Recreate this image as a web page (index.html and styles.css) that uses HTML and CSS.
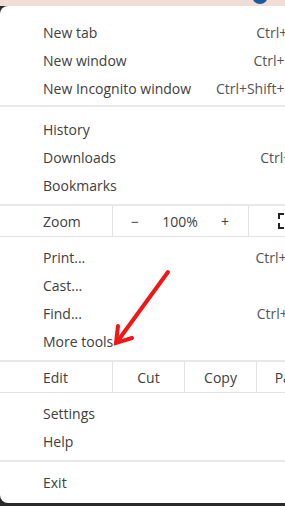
FILE: index.html
```html
<!DOCTYPE html>
<html>
<head>
  <title>Menu</title>
  <link rel="stylesheet" href="styles.css">
</head>
<body>
  <div class="topbar"><span class="avatar"></span></div>
  <div class="menu">
    <div class="group first">
      <div class="item"><span>New tab</span><span class="key">Ctrl+T</span></div>
      <div class="item"><span>New window</span><span class="key">Ctrl+N</span></div>
      <div class="item"><span>New Incognito window</span><span class="key">Ctrl+Shift+N</span></div>
    </div>
    <div class="group">
      <div class="item"><span>History</span><span class="key">&#9656;</span></div>
      <div class="item"><span>Downloads</span><span class="key">Ctrl+J</span></div>
      <div class="item"><span>Bookmarks</span><span class="key">&#9656;</span></div>
    </div>
    <div class="row zoom">
      <span class="label">Zoom</span>
      <span class="cell zoomctl"><span>&minus;</span><span>100%</span><span>+</span></span>
      <span class="cell full">
        <svg width="16" height="16" viewBox="0 0 16 16" fill="none" stroke="#222" stroke-width="2">
          <path d="M1 6V1h5M10 1h5v5M15 10v5h-5M6 15H1v-5"/>
        </svg>
      </span>
    </div>
    <div class="group tools">
      <div class="item"><span>Print...</span><span class="key">Ctrl+P</span></div>
      <div class="item"><span>Cast...</span></div>
      <div class="item"><span>Find...</span><span class="key">Ctrl+F</span></div>
      <div class="item"><span>More tools</span><span class="key">&#9656;</span></div>
    </div>
    <div class="row edit">
      <span class="label">Edit</span>
      <span class="cell">Cut</span>
      <span class="cell">Copy</span>
      <span class="cell">Paste</span>
    </div>
    <div class="group tight">
      <div class="item"><span>Settings</span></div>
      <div class="item"><span>Help</span><span class="key">&#9656;</span></div>
    </div>
    <div class="group tight last">
      <div class="item"><span>Exit</span></div>
    </div>
  </div>
  <svg class="arrow" width="285" height="506" viewBox="0 0 285 506">
    <g stroke="#f21616" stroke-width="4" stroke-linecap="round" fill="none">
      <path d="M168 272L117 342"/>
      <path d="M118 326L116 343L132 338"/>
    </g>
  </svg>
</body>
</html>
```

FILE: styles.css
```css
body {
  margin: 0;
  width: 285px;
  height: 506px;
  overflow: hidden;
  background: #2b2a29;
  font-family: "Open Sans", "Noto Sans", sans-serif;
  font-size: 14px;
  color: #404040;
  position: relative;
}
.topbar {
  height: 6px;
  background: #f0ddd5;
  position: relative;
  overflow: hidden;
}
.avatar {
  position: absolute;
  left: 252px;
  top: -12px;
  width: 16px;
  height: 16px;
  border-radius: 50%;
  background: #1d5c9b;
}
.menu {
  width: 340px;
  height: 497px;
  background: #fff;
  border-radius: 8px 0 0 8px;
}
.group {
  padding: 8px 0 5px;
  border-bottom: 2px solid #e8e8e8;
}
.group.first {
  padding-top: 12px;
  padding-bottom: 3px;
}
.group.tools {
  padding-top: 6px;
}
.group.tight {
  padding-top: 6px;
}
.group.last {
  border-bottom: none;
}
.item {
  height: 28px;
  display: flex;
  align-items: center;
  justify-content: space-between;
  padding: 0 45px 0 43px;
}
.key {
  color: #555;
}
.row {
  display: flex;
  height: 30px;
  align-items: center;
  border-bottom: 1px solid #e2e2e2;
}
.label {
  width: 69px;
  padding-left: 43px;
}
.cell {
  height: 100%;
  display: flex;
  align-items: center;
  justify-content: center;
  border-left: 1px solid #e2e2e2;
}
.zoomctl {
  width: 136px;
  justify-content: space-between;
  padding: 0 19px 0 18px;
  box-sizing: border-box;
}
.full {
  width: 60px;
  justify-content: flex-start;
  padding-left: 29px;
}
.edit .cell {
  width: 71px;
}
.arrow {
  position: absolute;
  left: 0;
  top: 0;
}
```
